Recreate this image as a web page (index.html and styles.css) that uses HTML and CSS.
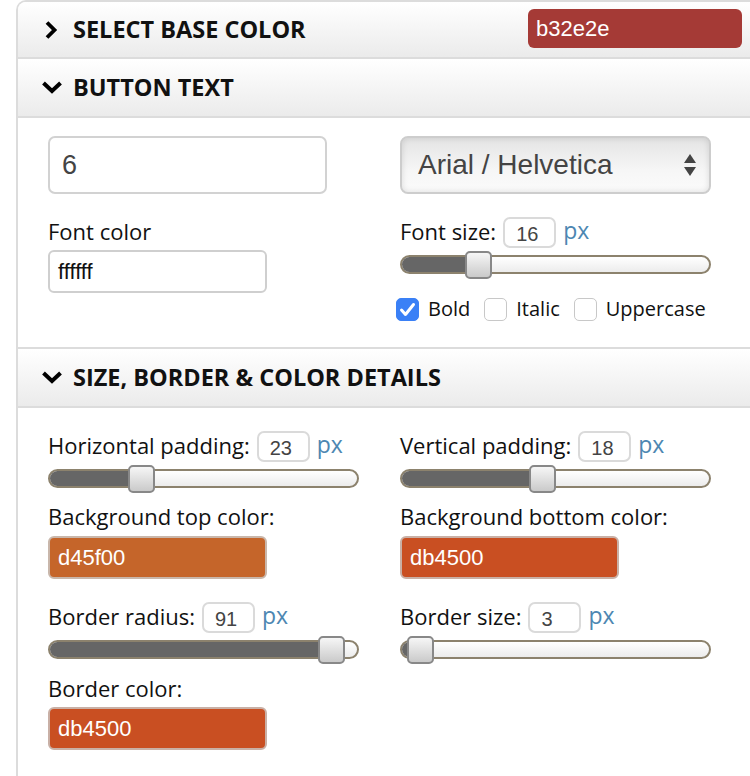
FILE: index.html
```html
<!DOCTYPE html>
<html>
<head>
<meta charset="utf-8">
<link rel="stylesheet" href="styles.css">
</head>
<body>
<div class="panel">
  <div class="head head-first">
    <svg class="chev" width="20" height="20" viewBox="0 0 20 20"><polyline points="5,2.5 12.5,10 5,17.5" fill="none" stroke="#000" stroke-width="3.8"/></svg>
    <span class="title">SELECT BASE COLOR</span>
    <div class="base-color">b32e2e</div>
  </div>
  <div class="head">
    <svg class="chev" width="20" height="20" viewBox="0 0 20 20"><polyline points="1.5,5 10,13 18.5,5" fill="none" stroke="#000" stroke-width="4"/></svg>
    <span class="title">BUTTON TEXT</span>
  </div>
  <div class="body body-text">
    <div class="col">
      <div class="text-input">6</div>
      <div class="label">Font color</div>
      <div class="color-input white">ffffff</div>
    </div>
    <div class="col">
      <div class="select">
        <span>Arial / Helvetica</span>
        <svg class="updown" width="14" height="24" viewBox="0 0 14 24"><polygon points="7,1 13,10 1,10" fill="#444"/><polygon points="1,14 13,14 7,23" fill="#444"/></svg>
      </div>
      <div class="num-row first-num">
        <span class="num-label">Font size:</span>
        <span class="num">16</span>
        <span class="px">px</span>
      </div>
      <div class="slider">
        <div class="track"><div class="fill" style="width:79px"></div></div>
        <div class="thumb" style="left:65px"></div>
      </div>
      <div class="checks">
        <span class="box checked"><svg width="23" height="23" viewBox="0 0 23 23"><polyline points="5.5,12 9.5,16.5 17.5,6.5" fill="none" stroke="#fff" stroke-width="3" stroke-linecap="round" stroke-linejoin="round"/></svg></span>
        <span class="check-label">Bold</span>
        <span class="box"></span>
        <span class="check-label">Italic</span>
        <span class="box"></span>
        <span class="check-label">Uppercase</span>
      </div>
    </div>
  </div>
  <div class="head">
    <svg class="chev" width="20" height="20" viewBox="0 0 20 20"><polyline points="1.5,5 10,13 18.5,5" fill="none" stroke="#000" stroke-width="4"/></svg>
    <span class="title">SIZE, BORDER &amp; COLOR DETAILS</span>
  </div>
  <div class="body body-size">
    <div class="col">
      <div class="num-row">
        <span class="num-label">Horizontal padding:</span>
        <span class="num">23</span>
        <span class="px">px</span>
      </div>
      <div class="slider">
        <div class="track"><div class="fill" style="width:94px"></div></div>
        <div class="thumb" style="left:80px"></div>
      </div>
      <div class="label gap-label">Background top color:</div>
      <div class="color-input top-color">d45f00</div>
      <div class="num-row second-num">
        <span class="num-label">Border radius:</span>
        <span class="num">91</span>
        <span class="px">px</span>
      </div>
      <div class="slider">
        <div class="track"><div class="fill" style="width:284px"></div></div>
        <div class="thumb" style="left:270px"></div>
      </div>
      <div class="label gap-label2">Border color:</div>
      <div class="color-input bottom-color">db4500</div>
    </div>
    <div class="col">
      <div class="num-row">
        <span class="num-label">Vertical padding:</span>
        <span class="num">18</span>
        <span class="px">px</span>
      </div>
      <div class="slider">
        <div class="track"><div class="fill" style="width:143px"></div></div>
        <div class="thumb" style="left:129px"></div>
      </div>
      <div class="label gap-label">Background bottom color:</div>
      <div class="color-input bottom-color">db4500</div>
      <div class="num-row second-num">
        <span class="num-label">Border size:</span>
        <span class="num">3</span>
        <span class="px">px</span>
      </div>
      <div class="slider">
        <div class="track"><div class="fill" style="width:21px"></div></div>
        <div class="thumb" style="left:7px"></div>
      </div>
    </div>
  </div>
</div>
</body>
</html>
```
FILE: styles.css
```css
html, body {
  margin: 0;
  padding: 0;
  background: #fff;
  overflow: hidden;
}
body {
  width: 750px;
  height: 776px;
  font-family: "Open Sans", "Liberation Sans", sans-serif;
  color: #111;
}
.panel {
  margin-left: 16px;
  width: 740px;
  min-height: 800px;
  border-left: 2px solid #dcdcdc;
  border-top: 2px solid #dcdcdc;
  border-top-left-radius: 10px;
  overflow: hidden;
}
.head {
  height: 57px;
  display: flex;
  align-items: center;
  padding-left: 24px;
  background: linear-gradient(#ffffff, #ebebeb);
  border-bottom: 2px solid #dcdcdc;
  box-sizing: content-box;
}
.head-first {
  height: 55px;
}
.chev {
  width: 20px;
  margin-right: 11px;
  flex: none;
}
.title {
  font-size: 23.5px;
  font-weight: 700;
  color: #111;
  line-height: 30px;
  margin-top: -2px;
}
.base-color {
  margin-left: auto;
  margin-right: 16px;
  width: 214px;
  height: 39px;
  box-sizing: border-box;
  background: #a53a36;
  border-radius: 6px;
  color: #fff;
  font-family: "Liberation Sans", Arial, sans-serif;
  font-size: 22px;
  line-height: 39px;
  padding-left: 8px;
  margin-top: -2px;
}
.body {
  display: grid;
  grid-template-columns: 311px 311px;
  column-gap: 41px;
  padding-left: 30px;
  align-items: start;
}
.body-text {
  padding-top: 18px;
  padding-bottom: 26px;
  border-bottom: 2px solid #dcdcdc;
}
.body-size {
  padding-top: 23px;
}
.col {
  display: flex;
  flex-direction: column;
  align-items: flex-start;
}
.text-input {
  width: 279px;
  height: 58px;
  box-sizing: border-box;
  border: 2px solid #d2d2d2;
  border-radius: 7px;
  font-family: "Liberation Sans", Arial, sans-serif;
  font-size: 27px;
  color: #444;
  line-height: 54px;
  padding-left: 12px;
}
.label {
  font-size: 22px;
  line-height: 26px;
  color: #111;
  margin-top: 24px;
  margin-bottom: 6px;
}
.gap-label {
  margin-top: 10px;
  margin-bottom: 7px;
}
.gap-label2 {
  margin-top: 11px;
  margin-bottom: 6px;
}
.color-input {
  width: 219px;
  height: 43px;
  box-sizing: border-box;
  border: 2px solid #c8c8c8;
  border-radius: 6px;
  font-family: "Liberation Sans", Arial, sans-serif;
  font-size: 22px;
  line-height: 39px;
  padding-left: 8px;
  color: #fff;
}
.color-input.white {
  background: #fff;
  color: #111;
  border-color: #cfcfcf;
}
.top-color {
  background: #c5652a;
  border-color: #c9b7ab;
}
.bottom-color {
  background: #c94f22;
  border-color: #c9b0a6;
}
.select {
  width: 311px;
  height: 58px;
  box-sizing: border-box;
  border: 2px solid #cdcdcd;
  border-radius: 8px;
  background: linear-gradient(#e4e4e4, #f6f6f6 60%, #fbfbfb);
  box-shadow: inset 0 0 6px rgba(0,0,0,0.12);
  display: flex;
  align-items: center;
  justify-content: space-between;
  padding-left: 16px;
  padding-right: 12px;
  font-family: "Liberation Sans", Arial, sans-serif;
  font-size: 28px;
  color: #444;
}
.num-row {
  display: flex;
  align-items: center;
  height: 31px;
}
.first-num {
  margin-top: 23px;
}
.second-num {
  margin-top: 23px;
}
.num-label {
  font-size: 22px;
  line-height: 26px;
  margin-right: 7px;
  margin-top: -3px;
}
.num {
  width: 53px;
  height: 31px;
  box-sizing: border-box;
  border: 2px solid #dadada;
  border-radius: 7px;
  font-family: "Liberation Sans", Arial, sans-serif;
  font-size: 20px;
  line-height: 30px;
  color: #444;
  padding-left: 11px;
}
.px {
  font-size: 23px;
  color: #4d87b2;
  margin-left: 7px;
  line-height: 26px;
  margin-top: -5px;
}
.slider {
  position: relative;
  width: 311px;
  height: 28px;
  margin-top: 3px;
}
.track {
  position: absolute;
  left: 0;
  top: 4px;
  width: 311px;
  height: 19px;
  box-sizing: border-box;
  border: 2px solid #8c826d;
  border-radius: 10px;
  background: linear-gradient(#ffffff, #ececec);
  overflow: hidden;
}
.fill {
  height: 100%;
  background: #666;
}
.thumb {
  position: absolute;
  top: 0;
  width: 27px;
  height: 28px;
  box-sizing: border-box;
  border: 2px solid #888;
  border-radius: 5px;
  background: linear-gradient(#f6f6f6, #cacaca);
}
.checks {
  display: flex;
  align-items: center;
  height: 24px;
  margin-top: 18px;
  margin-left: -4px;
}
.box {
  width: 23px;
  height: 23px;
  box-sizing: border-box;
  border: 1px solid #c8c8c8;
  border-radius: 5px;
  background: #fff;
  display: block;
}
.box.checked {
  background: #3a80f6;
  border-color: #3a80f6;
}
.box svg {
  display: block;
  margin: -1px;
}
.check-label {
  font-size: 20px;
  line-height: 24px;
  margin-left: 9px;
  margin-right: 14px;
}
```
